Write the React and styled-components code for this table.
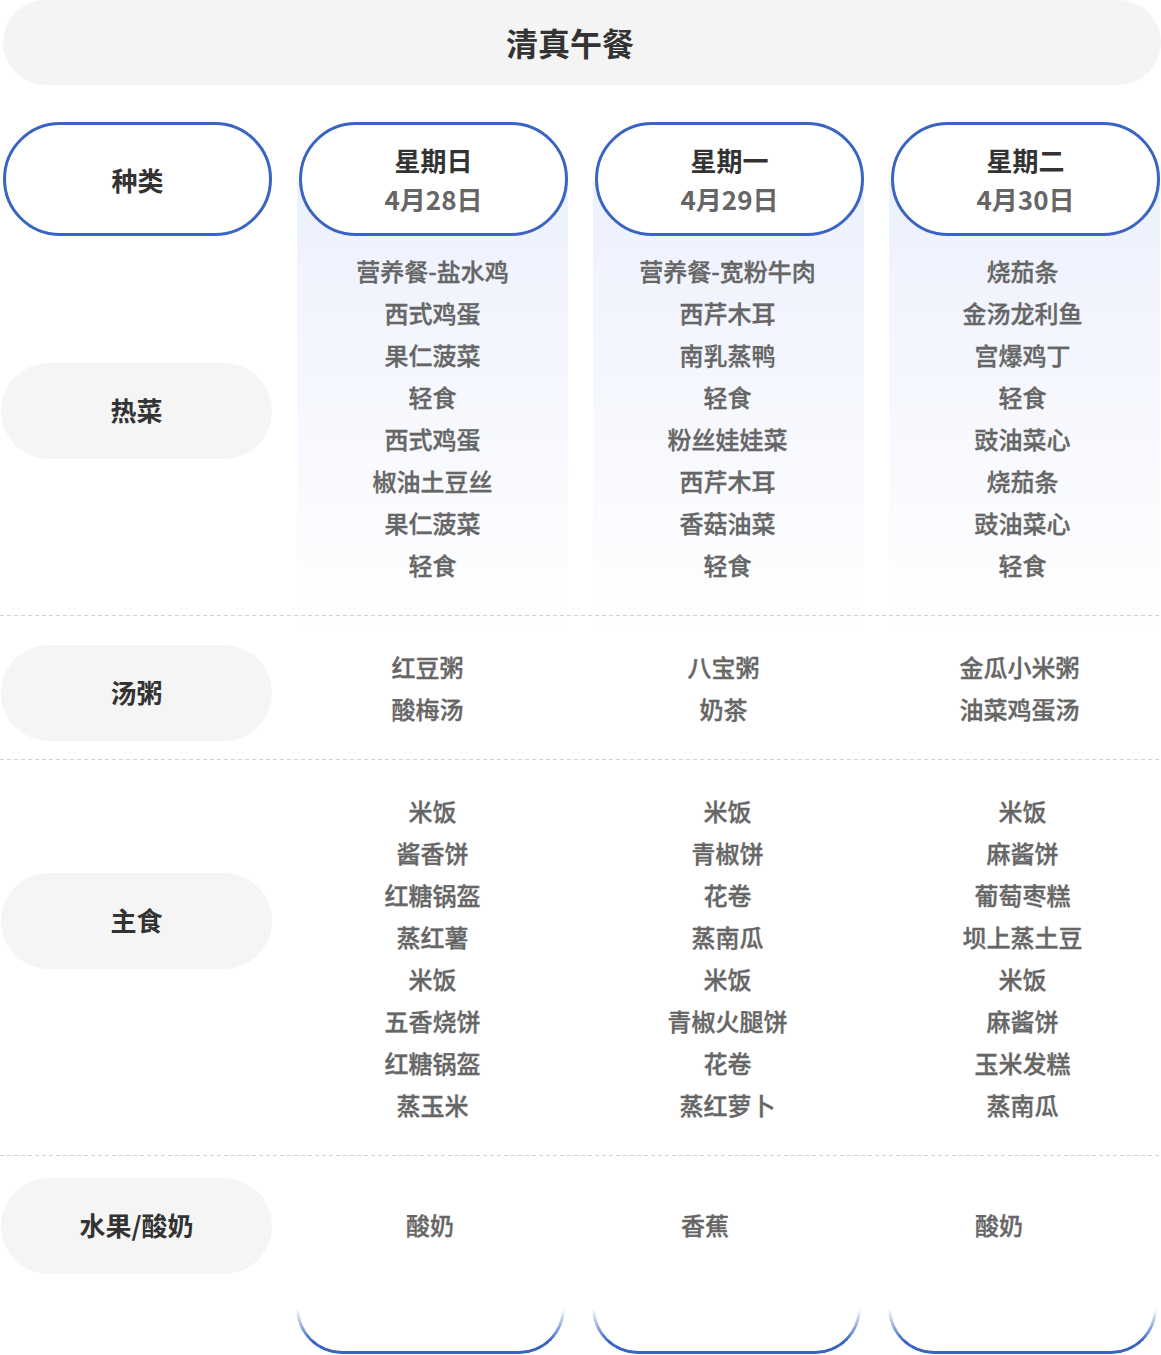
import React from 'react';
import styled, { createGlobalStyle } from 'styled-components';

const GlobalStyle = createGlobalStyle`
  * { box-sizing: border-box; }
  body {
    margin: 0;
    background: #fff;
    font-family: "Noto Sans CJK SC", "Noto Sans", sans-serif;
  }
`;

const BLUE = '#3964c2';

const Page = styled.div`
  width: 1161px;
`;

const Title = styled.div`
  margin-left: 3px;
  height: 85px;
  border-radius: 43px;
  background: #f4f4f4;
  display: flex;
  align-items: center;
  justify-content: center;
  padding: 0 24px 2px 0;
  font-size: 32px;
  font-weight: 700;
  color: #333;
`;

// 전체 표: 종류 열 + 요일 3열
const Table = styled.div`
  display: grid;
  margin-top: 37px;
  padding-left: 1px;
  grid-template-columns: repeat(4, 271px);
  grid-template-rows: 114px auto 1px auto 1px auto 1px auto auto;
  column-gap: 25px;
`;

const ColumnBg = styled.div`
  grid-column: ${(p) => p.$col};
  grid-row: 1 / -1;
  margin-top: 60px;
  background: linear-gradient(180deg, #edf1fd 0, #ffffff 450px);
`;

const HeadPill = styled.div`
  grid-column: ${(p) => p.$col};
  grid-row: 1;
  margin-left: 2px;
  border: 3px solid ${BLUE};
  border-radius: 57px;
  background: #fff;
  display: flex;
  flex-direction: column;
  align-items: center;
  justify-content: center;
  font-size: 26px;
  line-height: 39px;
`;

const DayName = styled.div`
  font-weight: 700;
  color: #333;
`;

const DayDate = styled.div`
  font-weight: 700;
  color: #666;
`;

const KindLabel = styled.div`
  font-weight: 700;
  color: #333;
`;

const CatCell = styled.div`
  grid-column: 1;
  grid-row: ${(p) => p.$row};
  padding-top: ${(p) => p.$top}px;
`;

const CatPill = styled.div`
  height: 96px;
  border-radius: 48px;
  background: #f5f5f5;
  display: flex;
  align-items: center;
  justify-content: center;
  padding-bottom: 3px;
  font-size: 26px;
  font-weight: 700;
  color: #333;
`;

const Dishes = styled.ul`
  grid-column: ${(p) => p.$col};
  grid-row: ${(p) => p.$row};
  list-style: none;
  margin: 0;
  padding: ${(p) => p.$top}px ${(p) => p.$shift}px ${(p) => 28 + 1}px 0;
  text-align: center;
`;

const Dish = styled.li`
  font-size: 24px;
  line-height: 42px;
  font-weight: 500;
  color: #666;
  -webkit-text-stroke: 0.35px #666;
`;

const Rule = styled.div`
  grid-column: 1 / -1;
  grid-row: ${(p) => p.$row};
  margin-left: -1px;
  background: repeating-linear-gradient(90deg, #d2d2d2 0 4px, transparent 4px 7px);
`;

const Curve = styled.div`
  grid-column: ${(p) => p.$col};
  grid-row: 9;
  margin: 19px 3px 0 -1px;
  height: 60px;
  border: 3px solid ${BLUE};
  border-top: 0;
  border-radius: 0 0 46px 46px;
  -webkit-mask-image: linear-gradient(180deg, transparent 25%, #000 80%);
  mask-image: linear-gradient(180deg, transparent 25%, #000 80%);
`;

const days = [
  {
    name: '星期日',
    date: '4月28日',
    hot: ['营养餐-盐水鸡', '西式鸡蛋', '果仁菠菜', '轻食', '西式鸡蛋', '椒油土豆丝', '果仁菠菜', '轻食'],
    soup: ['红豆粥', '酸梅汤'],
    staple: ['米饭', '酱香饼', '红糖锅盔', '蒸红薯', '米饭', '五香烧饼', '红糖锅盔', '蒸玉米'],
    fruit: ['酸奶'],
  },
  {
    name: '星期一',
    date: '4月29日',
    hot: ['营养餐-宽粉牛肉', '西芹木耳', '南乳蒸鸭', '轻食', '粉丝娃娃菜', '西芹木耳', '香菇油菜', '轻食'],
    soup: ['八宝粥', '奶茶'],
    staple: ['米饭', '青椒饼', '花卷', '蒸南瓜', '米饭', '青椒火腿饼', '花卷', '蒸红萝卜'],
    fruit: ['香蕉'],
  },
  {
    name: '星期二',
    date: '4月30日',
    hot: ['烧茄条', '金汤龙利鱼', '宫爆鸡丁', '轻食', '豉油菜心', '烧茄条', '豉油菜心', '轻食'],
    soup: ['金瓜小米粥', '油菜鸡蛋汤'],
    staple: ['米饭', '麻酱饼', '葡萄枣糕', '坝上蒸土豆', '米饭', '麻酱饼', '玉米发糕', '蒸南瓜'],
    fruit: ['酸奶'],
  },
];

// 구역별 위치 정보
const sections = [
  { key: 'hot', label: '热菜', row: 2, pillTop: 127, padTop: 14, shift: [0, 2, 4] },
  { key: 'soup', label: '汤粥', row: 4, pillTop: 29, padTop: 30, shift: [10, 10, 10] },
  { key: 'staple', label: '主食', row: 6, pillTop: 113, padTop: 30, shift: [0, 2, 4] },
  { key: 'fruit', label: '水果/酸奶', row: 8, pillTop: 22, padTop: 48, shift: [5, 47, 51] },
];

export default function App() {
  return (
    <Page>
      <GlobalStyle />
      <Title>清真午餐</Title>
      <Table>
        {days.map((d, i) => (
          <ColumnBg key={'bg' + i} $col={i + 2} />
        ))}

        <HeadPill $col={1}>
          <KindLabel>种类</KindLabel>
        </HeadPill>
        {days.map((d, i) => (
          <HeadPill key={d.name} $col={i + 2}>
            <DayName>{d.name}</DayName>
            <DayDate>{d.date}</DayDate>
          </HeadPill>
        ))}

        {sections.map((s) => (
          <React.Fragment key={s.key}>
            <CatCell $row={s.row} $top={s.pillTop}>
              <CatPill>{s.label}</CatPill>
            </CatCell>
            {days.map((d, i) => (
              <Dishes key={d.name} $col={i + 2} $row={s.row} $top={s.padTop} $shift={s.shift[i]}>
                {d[s.key].map((item, j) => (
                  <Dish key={j}>{item}</Dish>
                ))}
              </Dishes>
            ))}
          </React.Fragment>
        ))}

        <Rule $row={3} />
        <Rule $row={5} />
        <Rule $row={7} />

        {days.map((d, i) => (
          <Curve key={'c' + i} $col={i + 2} />
        ))}
      </Table>
    </Page>
  );
}
